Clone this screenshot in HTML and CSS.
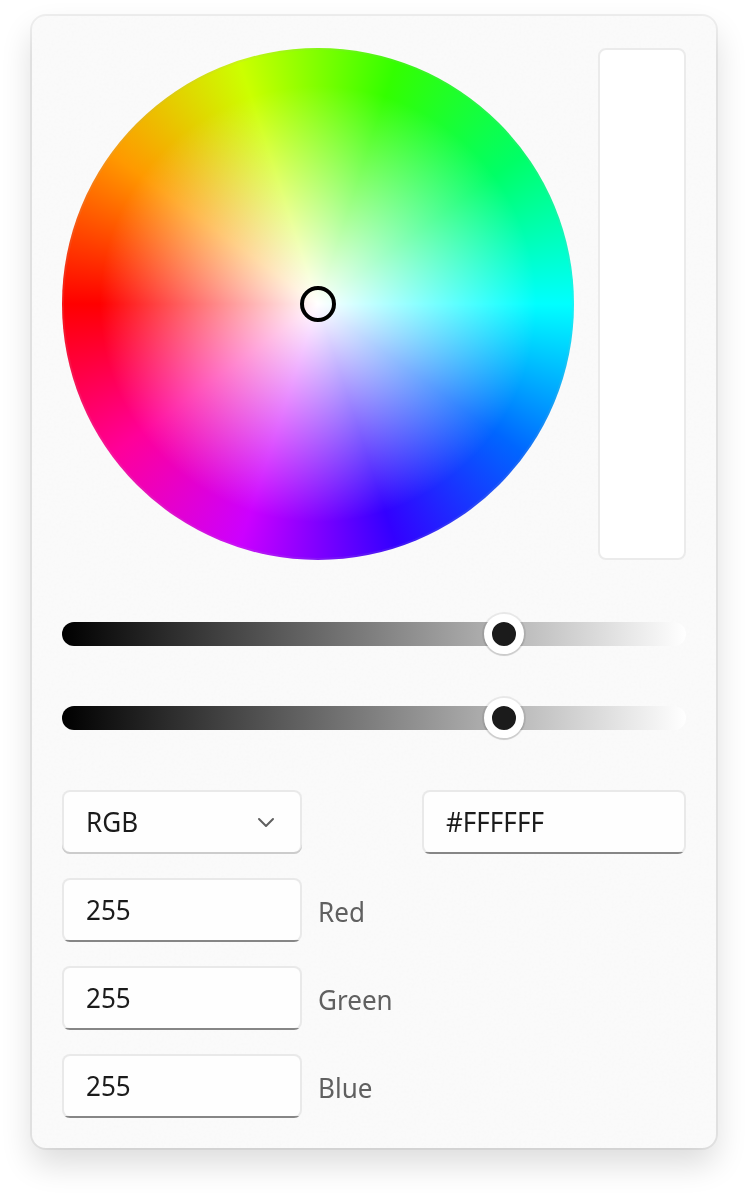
FILE: index.html
```html
<!DOCTYPE html>
<html lang="en">
<head>
<meta charset="utf-8">
<title>Color picker</title>
<link rel="stylesheet" href="styles.css">
</head>
<body>
<main class="picker">
  <svg class="grain" aria-hidden="true">
    <filter id="noise" x="0" y="0" width="100%" height="100%">
      <feTurbulence type="fractalNoise" baseFrequency="0.4" numOctaves="2"/>
      <feColorMatrix type="saturate" values="0"/>
      <feComponentTransfer><feFuncA type="linear" slope="0" intercept="1"/></feComponentTransfer>
    </filter>
    <rect width="100%" height="100%" filter="url(#noise)"/>
  </svg>
  <section class="spectrum">
    <div class="wheel"><span class="wheel-thumb"></span></div>
    <div class="preview"></div>
  </section>
  <section class="sliders">
    <div class="slider"><span class="thumb"></span></div>
    <div class="slider"><span class="thumb"></span></div>
  </section>
  <section class="fields">
    <div class="row row-mode">
      <div class="field select">
        <span class="text">RGB</span>
        <svg class="chevron" width="18" height="12" viewBox="0 0 18 12"><path d="M2 2l7 7 7-7"/></svg>
      </div>
      <div class="field input hex"><span class="text">#FFFFFF</span></div>
    </div>
    <div class="row"><div class="field input"><span class="text">255</span></div><span class="text label">Red</span></div>
    <div class="row"><div class="field input"><span class="text">255</span></div><span class="text label">Green</span></div>
    <div class="row"><div class="field input"><span class="text">255</span></div><span class="text label">Blue</span></div>
  </section>
</main>
</body>
</html>
```
FILE: styles.css
```css
* { box-sizing: border-box; }

body {
  margin: 0;
  height: 1196px;
  overflow: hidden;
  padding: 16px 32px;
  background: #fff;
  font-family: "Noto Sans", "Open Sans", sans-serif;
  font-size: 28px;
  color: #1b1b1b;
}

.picker {
  position: relative;
  width: 684px;
  height: 1132px;
  padding: 32px 30px;
  border-radius: 14px;
  background: #fcfcfc;
  box-shadow: 0 0 0 2px rgba(0, 0, 0, .06), 0 16px 32px rgba(0, 0, 0, .14);
}

.grain {
  position: absolute;
  inset: 0;
  width: 100%;
  height: 100%;
  border-radius: 14px;
  opacity: .025;
}

.spectrum { position: relative; display: flex; justify-content: space-between; }

.wheel {
  display: grid;
  place-items: center;
  width: 512px;
  height: 512px;
  border-radius: 50%;
  background:
    radial-gradient(circle, #fff 0, rgba(255, 255, 255, 0) 218px),
    conic-gradient(from 270deg, #f00, #f90, #cf0, #3f0, #0f6, #0ff, #06f, #30f, #c0f, #f09, #f00);
  box-shadow: inset 0 0 0 2px rgba(170, 170, 170, .12);
}

.wheel-thumb {
  width: 36px;
  height: 36px;
  border: 4px solid #000;
  border-radius: 50%;
}

.preview {
  width: 88px;
  height: 512px;
  border: 2px solid #ebebeb;
  border-radius: 8px;
  background: #fff;
}

.sliders {
  position: relative;
  display: grid;
  gap: 60px;
  margin-top: 62px;
}

.slider {
  display: flex;
  align-items: center;
  height: 24px;
  padding-left: 422px;
  border-radius: 12px;
  background: linear-gradient(90deg, #000, #fff);
}

.thumb {
  width: 40px;
  height: 40px;
  border: 8px solid #fff;
  border-radius: 50%;
  background: #1b1b1b;
  box-shadow: 0 0 0 2px rgba(0, 0, 0, .07), 0 2px 1px rgba(0, 0, 0, .12);
}

.fields {
  position: relative;
  display: grid;
  gap: 24px;
  margin-top: 60px;
}

.row { display: flex; align-items: center; gap: 16px; }
.row-mode { justify-content: space-between; }

.field {
  display: flex;
  align-items: center;
  justify-content: space-between;
  width: 240px;
  height: 64px;
  padding: 0 25px 2px 22px;
  border: 2px solid transparent;
  border-radius: 8px;
}

.hex { width: 264px; }

.select {
  padding: 2px 27px 4px 24px;
  border: 0;
  background: #fefefe;
  box-shadow: inset 0 -2px 0 #ccc, inset 0 0 0 2px #e9e9e9;
}

/* Flat underline, then the fill, then the outline ring beneath */
.input {
  background:
    linear-gradient(#868686, #868686) left bottom / 100% 2px no-repeat border-box,
    linear-gradient(#fefefe, #fefefe) padding-box,
    #e9e9e9 border-box;
  background:
    linear-gradient(#868686, #868686) left bottom / 100% 2px no-repeat border-box,
    linear-gradient(#fefefe, #fefefe) padding-box,
    linear-gradient(#e9e9e9, #e9e9e9) border-box;
}

.text {
  display: inline-block;
  line-height: 40px;
  transform: scaleX(.93);
  transform-origin: left;
}

.label { color: #606060; padding-top: 2px; }

.chevron {
  margin-top: 3px;
  fill: none;
  stroke: #5f5f5f;
  stroke-width: 2;
  stroke-linecap: round;
  stroke-linejoin: round;
}
```
